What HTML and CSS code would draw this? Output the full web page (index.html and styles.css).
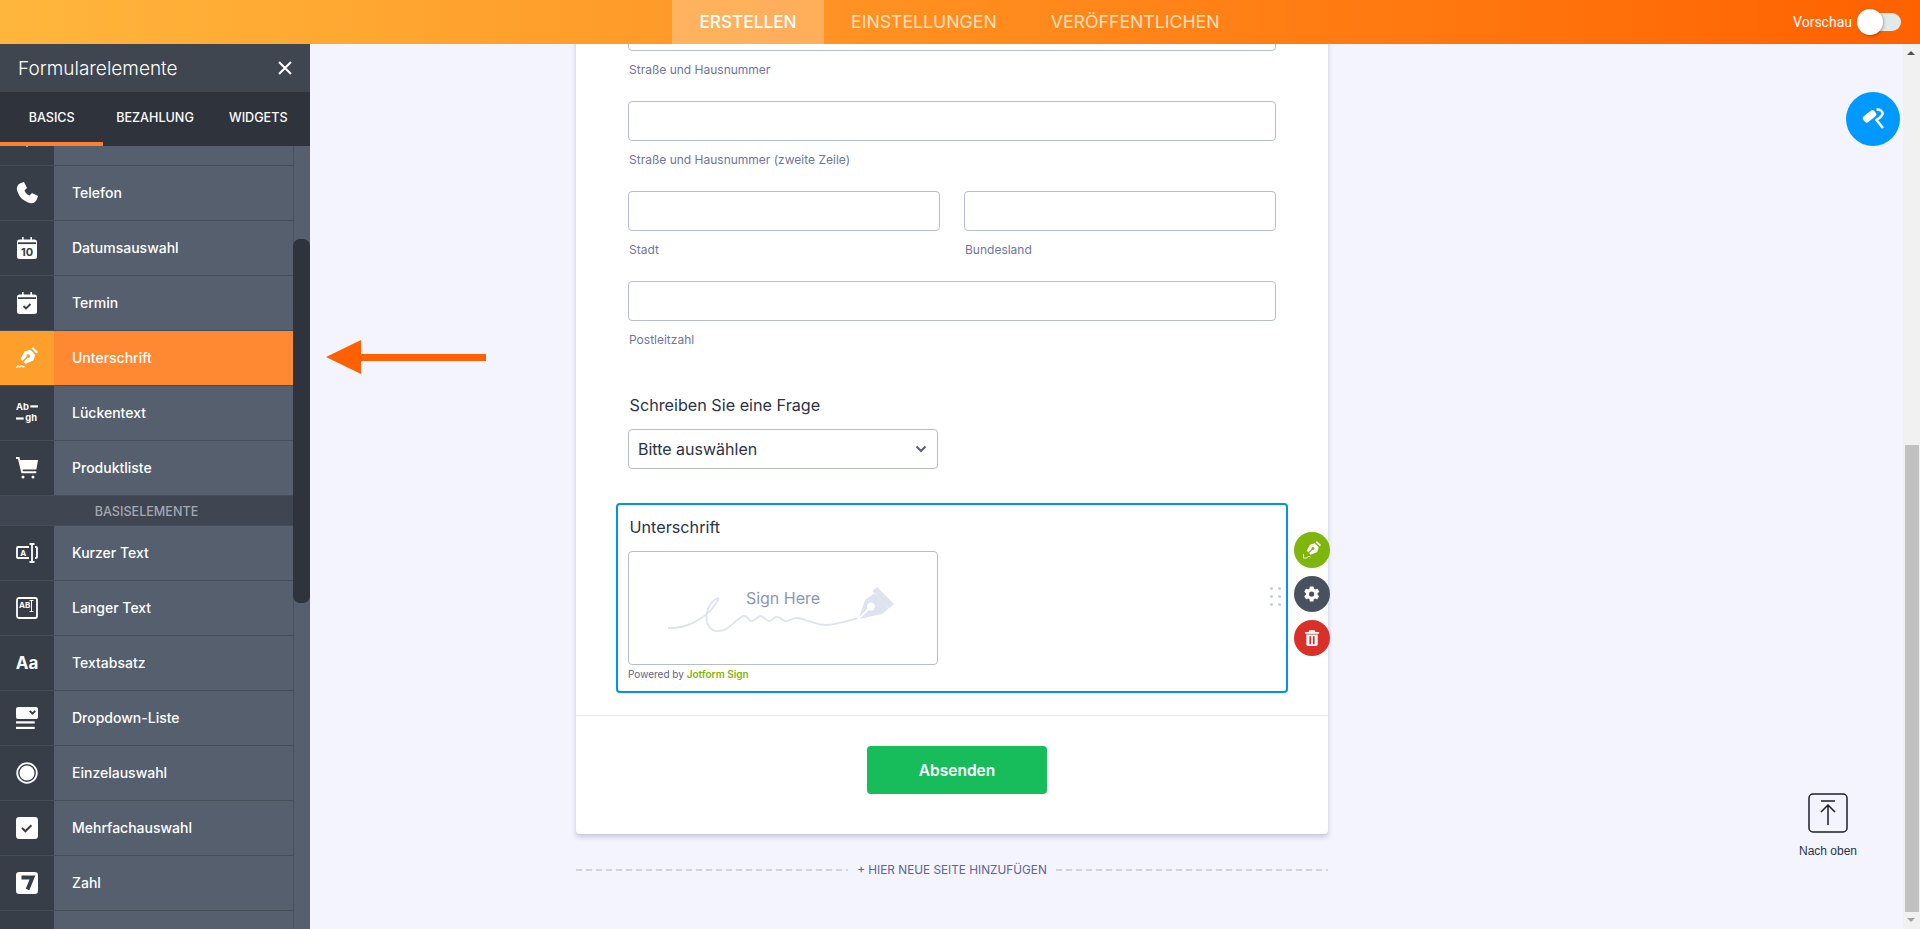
FILE: index.html
```html
<!DOCTYPE html>
<html lang="de">
<head>
    <meta charset="UTF-8">
    <meta name="viewport" content="width=device-width, initial-scale=1.0">
    <title>Formular erstellen</title>
    <link rel="stylesheet" href="styles.css">
</head>
<body>
    <header class="topbar">
        <nav class="topnav">
            <a class="topnav-item active">ERSTELLEN</a>
            <a class="topnav-item">EINSTELLUNGEN</a>
            <a class="topnav-item">VERÖFFENTLICHEN</a>
        </nav>
        <div class="preview">
            <span>Vorschau</span>
            <div class="toggle"><div class="toggle-knob"></div></div>
        </div>
    </header>

    <div class="workspace">
        <aside class="sidebar">
            <div class="sidebar-head">
                <span>Formularelemente</span>
                <svg class="close-icon" viewBox="0 0 16 16"><path d="M2 2l12 12M14 2L2 14"/></svg>
            </div>
            <div class="sidebar-tabs">
                <div class="sidebar-tab active">BASICS</div>
                <div class="sidebar-tab">BEZAHLUNG</div>
                <div class="sidebar-tab">WIDGETS</div>
            </div>
            <div class="sidebar-body">
                <ul class="element-list">
                    <li class="element">
                        <div class="element-icon"><svg viewBox="0 0 24 24"><path d="M12 2a7 7 0 0 0-7 7c0 5 7 13 7 13s7-8 7-13a7 7 0 0 0-7-7z"/></svg></div>
                    </li>
                    <li class="element">
                        <div class="element-icon"><svg viewBox="0 0 22 22"><path d="M5 1l3-1 3 6-2.500 2.500c1 2.500 2.500 4 5 5L16 11l6 3-1 3c-1 3-4 5-7 4C7 19 3 15 1 8 .5 5 2 2 5 1z"/></svg></div>
                        <div class="element-name">Telefon</div>
                    </li>
                    <li class="element">
                        <div class="element-icon"><svg viewBox="0 0 20 22"><path d="M5 0h1.600v2.500h6.800V0H15v2.500h2.500A2.500 2.500 0 0 1 20 5v14.500a2.500 2.500 0 0 1-2.500 2.500h-15A2.500 2.500 0 0 1 0 19.500V5a2.500 2.500 0 0 1 2.500-2.500H5z"/><path class="dark-stroke" d="M1 6.200h18"/><text class="cal-num" x="10" y="18.500">10</text></svg></div>
                        <div class="element-name">Datumsauswahl</div>
                    </li>
                    <li class="element">
                        <div class="element-icon"><svg viewBox="0 0 20 22"><path d="M5 0h1.600v2.500h6.800V0H15v2.500h2.500A2.500 2.500 0 0 1 20 5v14.500a2.500 2.500 0 0 1-2.500 2.500h-15A2.500 2.500 0 0 1 0 19.500V5a2.500 2.500 0 0 1 2.500-2.500H5z"/><path class="dark-stroke" d="M1 6.200h18M6.500 14l2.500 2.500 4.500-4.500"/></svg></div>
                        <div class="element-name">Termin</div>
                    </li>
                    <li class="element selected">
                        <div class="element-icon"><svg viewBox="0 0 20 20"><path d="M15.500 0L20 4.500l-1.400 1.400-4.500-4.500zM13 2.600l4.400 4.400-1.600 5.200-7.300 3.100-1.700-1.700 3.800-3.800a1.600 1.600 0 1 0-1-1L5.800 12.600 4.100 10.900l3.600-6.800z"/><path class="white-stroke" d="M.5 19c1-2 1.600-2.600 2.200-1.400.4 1 1 1 1.600 0 .5-.9 1-.9 1.500 0 .4.600 1 .600 2 .2"/></svg></div>
                        <div class="element-name">Unterschrift</div>
                    </li>
                    <li class="element">
                        <div class="element-icon"><svg viewBox="0 0 20 20"><text class="gap-text" x="0" y="7.500">Ab</text><rect x="13" y="3" width="7" height="2"/><rect x="0" y="14" width="7" height="2"/><text class="gap-text" x="8.500" y="17.500">gh</text></svg></div>
                        <div class="element-name">Lückentext</div>
                    </li>
                    <li class="element">
                        <div class="element-icon"><svg viewBox="0 0 22 22"><path d="M0 0h3.400l.8 3H22l-1.600 9.500H6.600l.4 1.800h13.300v2H5.400L2 2H0z"/><circle cx="7" cy="20" r="1.500"/><circle cx="17" cy="20" r="1.500"/></svg></div>
                        <div class="element-name">Produktliste</div>
                    </li>
                    <li class="element-section">BASISELEMENTE</li>
                    <li class="element">
                        <div class="element-icon"><svg viewBox="0 0 22 20"><path class="white-stroke thick" d="M13 4H2a1 1 0 0 0-1 1v9a1 1 0 0 0 1 1h11M19 4h1a1 1 0 0 1 1 1v9a1 1 0 0 1-1 1h-1M13.500 1h2l.5.5.5-.5h2M13.500 19h2l.5-.5.5.5h2M16 1.500v17"/><text class="box-text" x="4.200" y="12.500">A</text></svg></div>
                        <div class="element-name">Kurzer Text</div>
                    </li>
                    <li class="element">
                        <div class="element-icon"><svg viewBox="0 0 22 22"><rect class="white-stroke thick" x="1" y="1" width="20" height="20" rx="2"/><text class="box-text" x="3" y="10.500">AB</text><path class="white-stroke" d="M13.500 3.500h4M13.500 14.500h4M15.500 3.500v11"/></svg></div>
                        <div class="element-name">Langer Text</div>
                    </li>
                    <li class="element">
                        <div class="element-icon"><span class="glyph-aa">Aa</span></div>
                        <div class="element-name">Textabsatz</div>
                    </li>
                    <li class="element">
                        <div class="element-icon"><svg viewBox="0 0 20 20"><path d="M2 0h16a2 2 0 0 1 2 2v7a2 2 0 0 1-2 2H2a2 2 0 0 1-2-2V2a2 2 0 0 1 2-2z"/><path class="dark-stroke" d="M12.500 3.500L15 6l2.500-2.500"/><rect y="13" width="17" height="2"/><rect y="18" width="17" height="2"/></svg></div>
                        <div class="element-name">Dropdown-Liste</div>
                    </li>
                    <li class="element">
                        <div class="element-icon"><svg viewBox="0 0 22 22"><circle class="white-stroke thick" cx="11" cy="11" r="9.800"/><circle cx="11" cy="11" r="7.500"/></svg></div>
                        <div class="element-name">Einzelauswahl</div>
                    </li>
                    <li class="element">
                        <div class="element-icon"><svg viewBox="0 0 20 20"><rect width="20" height="20" rx="3"/><path class="dark-stroke" d="M5.500 10l3 3 5.500-5.500"/></svg></div>
                        <div class="element-name">Mehrfachauswahl</div>
                    </li>
                    <li class="element">
                        <div class="element-icon"><svg viewBox="0 0 20 20"><rect width="20" height="20" rx="3"/><path class="dark-stroke wide" d="M5 5h10l-4.500 11"/></svg></div>
                        <div class="element-name">Zahl</div>
                    </li>
                    <li class="element">
                        <div class="element-icon"></div>
                    </li>
                </ul>
                <div class="sidebar-track"><div class="sidebar-thumb"></div></div>
            </div>
        </aside>

        <main class="canvas">
            <div class="form-card">
                <div class="field wide">
                    <div class="text-input"></div>
                    <label>Straße und Hausnummer</label>
                </div>
                <div class="field wide">
                    <div class="text-input"></div>
                    <label>Straße und Hausnummer (zweite Zeile)</label>
                </div>
                <div class="field-row">
                    <div class="field">
                        <div class="text-input"></div>
                        <label>Stadt</label>
                    </div>
                    <div class="field">
                        <div class="text-input"></div>
                        <label>Bundesland</label>
                    </div>
                </div>
                <div class="field wide">
                    <div class="text-input"></div>
                    <label>Postleitzahl</label>
                </div>

                <div class="question">
                    <h4>Schreiben Sie eine Frage</h4>
                    <div class="select-box">
                        <span>Bitte auswählen</span>
                        <svg viewBox="0 0 12 8"><path d="M1.500 1.500L6 6l4.500-4.500"/></svg>
                    </div>
                </div>

                <div class="sign-question">
                    <h4>Unterschrift</h4>
                    <div class="sign-box">
                        <span>Sign Here</span>
                        <svg viewBox="0 0 310 114">
                            <path class="sign-line" d="M40 77C56 78 75 70 87 54C91 48 92 46 88 48C81 52 77 62 79 71C81 79 88 82 96 79C104 76 110 66 116 65C121 65 120 71 124 70C128 69 130 65 133 65C137 66 139 71 142 70C145 69 146 65 150 66C154 67 155 71 159 70C163 69 165 67 169 67C174 67 176 69 180 70C186 71 188 74 198 74C208 74 220 70 230 67"/>
                            <path class="sign-pen" fill-rule="evenodd" d="M249 36L266 53 261 57.500 244.500 40zM247 42L260.500 57.500 254 63 231.500 68 241 59a4 4 0 1 0-1.500-1.500L231 66.500 237 49z"/>
                        </svg>
                    </div>
                    <p class="powered">Powered by <b>Jotform Sign</b></p>

                    <div class="drag-dots"><i></i><i></i><i></i><i></i><i></i><i></i></div>
                    <div class="tools">
                        <div class="tool green"><svg viewBox="0 0 20 20"><path d="M15.500 0L20 4.500l-1.400 1.400-4.500-4.500zM13 2.600l4.400 4.400-1.600 5.200-7.300 3.100-1.700-1.700 3.800-3.800a1.600 1.600 0 1 0-1-1L5.800 12.600 4.100 10.900l3.600-6.800z"/><path class="white-stroke" d="M.5 14.500v4.500h3l3-2 2 1"/></svg></div>
                        <div class="tool slate"><svg viewBox="0 0 24 24"><path d="M19.400 13c0-.3.100-.6.100-1s0-.7-.1-1l2.100-1.600c.2-.2.200-.4.100-.6l-2-3.500c-.1-.2-.4-.3-.6-.2l-2.500 1c-.5-.4-1.100-.7-1.700-1L14 2.400c0-.2-.2-.4-.5-.4h-4c-.2 0-.5.200-.5.400l-.4 2.700c-.6.200-1.200.6-1.700 1l-2.500-1c-.2-.1-.5 0-.6.200l-2 3.500c-.1.200-.1.400.1.600L4 11c0 .3-.1.700-.1 1s0 .7.1 1l-2.100 1.600c-.2.200-.2.400-.1.600l2 3.500c.1.200.4.300.6.200l2.500-1c.5.400 1.100.7 1.700 1l.4 2.700c0 .2.300.4.500.4h4c.3 0 .5-.2.500-.4l.4-2.700c.6-.2 1.200-.6 1.700-1l2.500 1c.2.100.5 0 .6-.2l2-3.500c.1-.2.100-.4-.1-.6zM11.500 15.500a3.500 3.500 0 1 1 0-7 3.500 3.500 0 0 1 0 7z"/></svg></div>
                        <div class="tool red"><svg class="trash" viewBox="0 0 16 18"><path d="M5 0h6l1 2h4v2H0V2h4zM1.500 5h13v11a2 2 0 0 1-2 2h-9a2 2 0 0 1-2-2zM5 7v9h2V7zm4 0v9h2V7z" fill-rule="evenodd"/></svg></div>
                    </div>
                </div>

                <div class="submit-area">
                    <button class="submit-btn">Absenden</button>
                </div>
            </div>

            <div class="add-page">
                <span class="dash-line"></span>
                <span class="add-page-text">+ HIER NEUE SEITE HINZUFÜGEN</span>
                <span class="dash-line"></span>
            </div>

            <!-- floating stuff on top of the canvas -->
            <div class="guide-arrow"></div>
            <div class="brush-btn">
                <svg viewBox="0 0 24 24"><rect x="1.500" y="6" width="14" height="7.500" rx="2.500" transform="rotate(-38 8 9.500)"/><path class="brush-handle" d="M15.500 2.500c3.500-.5 6.500 2 6 4.500s-2.500 3.500-6 6l6.500 8"/></svg>
            </div>
            <div class="to-top">
                <svg viewBox="0 0 40 40"><rect x="1" y="1" width="38" height="38" rx="4"/><path d="M13 8h14M20 32V12M13 19l7-7 7 7"/></svg>
                <span>Nach oben</span>
            </div>
        </main>

        <div class="page-scroll">
            <div class="scroll-arrow up"></div>
            <div class="scroll-gap"></div>
            <div class="scroll-thumb"></div>
            <div class="scroll-arrow down"></div>
        </div>
    </div>
</body>
</html>
```

FILE: styles.css
```css
* {
    margin: 0;
    padding: 0;
    box-sizing: border-box;
}

html, body {
    height: 100%;
    overflow: hidden;
}

body {
    font-family: Inter, 'Liberation Sans', sans-serif;
    background: #f3f4fd;
    display: flex;
    flex-direction: column;
}

/* top bar */
.topbar {
    height: 44px;
    flex-shrink: 0;
    background: linear-gradient(90deg, #ffb63c 0%, #ff9a28 35%, #ff6100 100%);
    display: flex;
    padding-left: 672px;
    position: relative;
    z-index: 5;
}

.topnav {
    display: flex;
}

.topnav-item {
    font-size: 17.700px;
    line-height: 44px;
    color: #ffe0bd;
    padding: 0 27px;
}

.topnav-item.active {
    color: #fff;
    font-size: 17.200px;
    font-weight: 500;
    padding: 0 27.500px;
    background: rgba(255, 255, 255, 0.25);
}

.preview {
    margin-left: auto;
    display: flex;
    align-items: center;
    padding-right: 19px;
    color: #fff;
    font-family: Roboto, sans-serif;
    font-size: 14px;
}

.toggle {
    width: 44px;
    height: 18px;
    margin-left: 5px;
    background: #e3e9e9;
    border-radius: 9px;
    position: relative;
}

.toggle-knob {
    position: absolute;
    left: 0;
    top: -4px;
    width: 26px;
    height: 26px;
    border-radius: 50%;
    background: #fff;
    box-shadow: 1px 1px 3px rgba(0, 0, 0, 0.3);
}

.workspace {
    flex: 1;
    display: flex;
    min-height: 0;
}

/* left panel */
.sidebar {
    width: 310px;
    flex-shrink: 0;
    display: flex;
    flex-direction: column;
    color: #fff;
}

.sidebar-head {
    height: 48px;
    flex-shrink: 0;
    background: #40464f;
    display: flex;
    align-items: center;
    justify-content: space-between;
    padding: 0 17px 0 18px;
    font-size: 19px;
    font-weight: 300;
}

.close-icon {
    width: 16px;
    height: 16px;
    fill: none;
    stroke: #fff;
    stroke-width: 2;
}

.sidebar-tabs {
    height: 54px;
    flex-shrink: 0;
    background: #2f333b;
    display: flex;
    position: relative;
    z-index: 2;
}

.sidebar-tab {
    flex: 1;
    text-align: center;
    font-size: 12.600px;
    font-weight: 500;
    line-height: 52px;
    border-bottom: 4px solid transparent;
}

.sidebar-tab.active {
    border-bottom-color: #ff8033;
}

.sidebar-body {
    flex: 1;
    display: flex;
    min-height: 0;
    overflow: hidden;
    background: #555f6e;
}

.element-list {
    width: 293px;
    flex-shrink: 0;
    list-style: none;
    margin-top: -35px;
}

.element {
    height: 55px;
    display: flex;
    background: #555f6e;
    border-bottom: 1px solid #454d59;
}

.element-icon {
    width: 54px;
    flex-shrink: 0;
    background: #373e48;
    display: flex;
    align-items: center;
    justify-content: center;
}

.element-icon svg {
    width: 22px;
    height: 22px;
    fill: #fff;
}

.element-name {
    padding-left: 18px;
    font-size: 14px;
    font-weight: 500;
    line-height: 54px;
}

.element.selected {
    background: #ff8832;
}

.element.selected .element-icon {
    background: #ff9f2b;
}

.element-section {
    height: 30px;
    background: #3f4551;
    border-bottom: 1px solid #454d59;
    color: #a3a9b2;
    text-align: center;
    font-size: 12.600px;
    font-weight: 500;
    line-height: 31px;
}

.glyph-aa {
    font-size: 17px;
    font-weight: 700;
}

.cal-num {
    font-size: 11px;
    font-weight: 700;
    fill: #373e48;
    text-anchor: middle;
}

.gap-text {
    font-size: 8.500px;
    font-weight: 700;
}

.box-text {
    font-size: 8px;
    font-weight: 700;
}

.dark-stroke {
    fill: none;
    stroke: #373e48;
    stroke-width: 1.800;
}

.dark-stroke.wide {
    stroke-width: 3.500;
}

.white-stroke {
    fill: none;
    stroke: #fff;
    stroke-width: 1;
}

.white-stroke.thick {
    stroke-width: 1.800;
}

.sidebar-track {
    flex: 1;
    border-left: 1px solid #47505c;
}

.sidebar-thumb {
    width: 17px;
    height: 364px;
    margin: 93px 0 0 -1px;
    background: #2f333b;
    border-radius: 7px;
}

/* form canvas */
.canvas {
    flex: 1;
    min-width: 0;
    position: relative;
    overflow: hidden;
    padding-left: 266px;
}

.form-card {
    width: 752px;
    margin-top: -33px;
    padding: 0 0 0 52px;
    background: #fff;
    border-radius: 0 0 4px 4px;
    box-shadow: 0 3px 5px rgba(87, 93, 150, 0.3);
}

.field {
    width: 312px;
    padding-bottom: 23px;
}

.field.wide {
    width: 648px;
}

.field-row {
    display: flex;
    gap: 24px;
}

.text-input {
    height: 40px;
    border: 1px solid #b8bdc9;
    border-radius: 4px;
    background: #fff;
}

.field label {
    display: block;
    margin-top: 11px;
    padding-left: 1px;
    font-size: 12px;
    line-height: 16px;
    color: #6f7699;
}

.question {
    padding-top: 24px;
}

.question h4,
.sign-question h4 {
    font-size: 16.200px;
    font-weight: 400;
    line-height: 20px;
    color: #2c3345;
    padding-left: 1.500px;
}

.select-box {
    width: 310px;
    height: 40px;
    margin-top: 14px;
    border: 1px solid #b8bdc9;
    border-radius: 4px;
    padding: 0 10px 0 9px;
    display: flex;
    align-items: center;
    justify-content: space-between;
    font-size: 16px;
    color: #2c3345;
}

.select-box svg {
    width: 12px;
    height: 8px;
    fill: none;
    stroke: #57607a;
    stroke-width: 2;
}

.sign-question {
    width: 672px;
    height: 190px;
    margin: 34px 0 0 -12px;
    padding: 12px 10px 0;
    border: 2px solid #0293e2;
    border-radius: 4px;
    position: relative;
}

.sign-box {
    width: 310px;
    height: 114px;
    margin-top: 14px;
    border: 1px solid #b8bdc9;
    border-radius: 4px;
    position: relative;
    padding-top: 36px;
    text-align: center;
    font-size: 16px;
    line-height: 20px;
    color: #8d97b4;
}

.sign-box svg {
    position: absolute;
    left: -1px;
    top: -1px;
    width: 310px;
    height: 114px;
}

.sign-line {
    fill: none;
    stroke: #dfe3ef;
    stroke-width: 1.800;
}

.sign-pen {
    fill: #dfe3ef;
}

.powered {
    margin-top: 2px;
    font-size: 10px;
    line-height: 14px;
    color: #5d6480;
}

.powered b {
    color: #7fb60d;
    font-weight: 600;
}

.drag-dots {
    position: absolute;
    right: 5px;
    top: 82px;
    width: 11px;
    display: flex;
    flex-wrap: wrap;
    gap: 5px 5px;
}

.drag-dots i {
    width: 3px;
    height: 3px;
    border-radius: 50%;
    background: #c8cede;
}

.tools {
    position: absolute;
    left: 676px;
    top: 27px;
    display: flex;
    flex-direction: column;
    gap: 8px;
}

.tool {
    width: 36px;
    height: 36px;
    border-radius: 50%;
    display: flex;
    align-items: center;
    justify-content: center;
}

.tool svg {
    width: 18px;
    height: 18px;
    fill: #fff;
}

.tool svg.trash {
    width: 14px;
    height: 16px;
}

.tool.green { background: #7fb60d; }
.tool.slate { background: #4a515e; }
.tool.red { background: #d9302a; }

.submit-area {
    margin: 22px 0 0 -52px;
    padding: 30px 0 40px 10px;
    border-top: 1px solid #e6e8f2;
    text-align: center;
}

.submit-btn {
    width: 180px;
    height: 48px;
    border: none;
    border-radius: 4px;
    background: #18bd5b;
    color: #fff;
    font-family: inherit;
    font-size: 15.500px;
    font-weight: 600;
}

.add-page {
    width: 752px;
    margin-top: 29px;
    display: flex;
    align-items: center;
    gap: 9px;
}

.dash-line {
    flex: 1;
    height: 2px;
    background: repeating-linear-gradient(90deg, #cfd1ec 0, #cfd1ec 6px, transparent 6px, transparent 10px);
}

.add-page-text {
    font-size: 11.800px;
    color: #5f6491;
}

.guide-arrow {
    position: absolute;
    left: 51px;
    top: 310px;
    width: 125px;
    height: 7px;
    background: #ff6100;
}

.guide-arrow::before {
    content: "";
    position: absolute;
    left: -35px;
    top: -14px;
    border-style: solid;
    border-width: 17.500px 35px 17.500px 0;
    border-color: transparent #ff6100 transparent transparent;
}

.brush-btn {
    position: absolute;
    right: 3px;
    top: 48px;
    width: 54px;
    height: 54px;
    border-radius: 50%;
    background: #0099ff;
    display: flex;
    align-items: center;
    justify-content: center;
}

.brush-btn svg {
    width: 24px;
    height: 24px;
    fill: #fff;
}

.brush-handle {
    fill: none;
    stroke: #fff;
    stroke-width: 2.500;
}

.to-top {
    position: absolute;
    left: 1480px;
    top: 749px;
    width: 76px;
    display: flex;
    flex-direction: column;
    align-items: center;
    gap: 11px;
    font-family: 'Liberation Sans', sans-serif;
    font-size: 12px;
    color: #2c3345;
}

.to-top svg {
    width: 40px;
    height: 40px;
    fill: none;
    stroke: #1d1f26;
    stroke-width: 1.500;
}

/* page scrollbar */
.page-scroll {
    width: 17px;
    flex-shrink: 0;
    background: #f1f1f1;
    display: flex;
    flex-direction: column;
}

.scroll-arrow {
    height: 17px;
    position: relative;
}

.scroll-arrow::after {
    content: "";
    position: absolute;
    left: 4px;
    border-style: solid;
    border-color: transparent;
    border-width: 4px;
}

.scroll-arrow.up::after {
    top: 3px;
    border-bottom-color: #505050;
}

.scroll-arrow.down::after {
    top: 6px;
    border-top-color: #a3a3a3;
}

.scroll-gap {
    height: 384px;
}

.scroll-thumb {
    flex: 1;
    margin: 0 1px 0 2px;
    background: #c1c1c1;
}
```
